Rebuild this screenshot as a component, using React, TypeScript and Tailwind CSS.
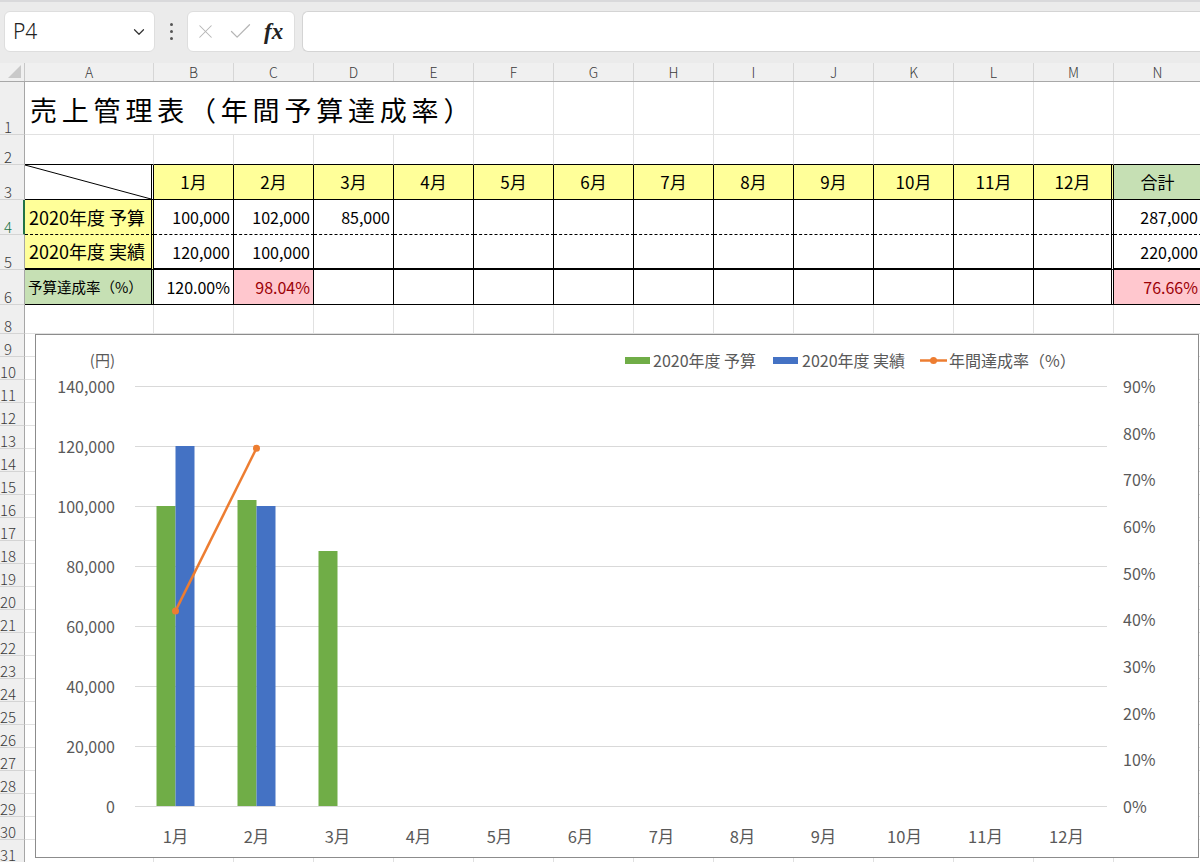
import { ChevronDown, X, Check } from 'lucide-react';

const GRID = 'grid grid-cols-[25px_129px_repeat(12,80px)_88px]';
const COLS = ['A', 'B', 'C', 'D', 'E', 'F', 'G', 'H', 'I', 'J', 'K', 'L', 'M', 'N'];
const MONTHS = Array.from({ length: 12 }, (_, i) => `${i + 1}月`);

const budget = [100000, 102000, 85000];
const actual = [120000, 100000];
const budgetTotal = budget.reduce((a, b) => a + b, 0);
const actualTotal = actual.reduce((a, b) => a + b, 0);
const fmt = (v: number) => v.toLocaleString('en-US');

type Row = { n: number; h: string };
const ROWS: Row[] = [
  { n: 1, h: 'h-[53px]' },
  { n: 2, h: 'h-[30px]' },
  { n: 3, h: 'h-[35px]' },
  { n: 4, h: 'h-[35px]' },
  { n: 5, h: 'h-[35px]' },
  { n: 6, h: 'h-[35px]' },
  { n: 8, h: 'h-[29px]' },
  ...Array.from({ length: 23 }, (_, i) => ({ n: 9 + i, h: 'h-[23px]' })),
];

function FormulaBar() {
  return (
    <div className="h-[63px] bg-[#ebebeb] border-t-2 border-[#d9d9db] flex items-start pt-[9px]">
      <div className="ml-[4px] w-[151px] h-[41px] bg-white rounded-md border border-[#dedede] flex items-center pl-[8px] pr-[6px]">
        <span className="text-[21px] text-[#222] flex-1 font-['Noto_Sans','Liberation_Sans',sans-serif] font-light">P4</span>
        <ChevronDown size={18} strokeWidth={1.6} className="text-[#333]" />
      </div>
      <div className="w-[32px] h-[41px] flex flex-col items-center justify-center gap-[4px]">
        <span className="w-[3px] h-[3px] rounded-full bg-[#555]" />
        <span className="w-[3px] h-[3px] rounded-full bg-[#555]" />
        <span className="w-[3px] h-[3px] rounded-full bg-[#555]" />
      </div>
      <div className="w-[108px] h-[41px] bg-white rounded-md border border-[#dedede] flex items-center pl-[6px]">
        <X size={23} strokeWidth={1.1} className="text-[#b5b5b5]" />
        <Check size={27} strokeWidth={1.1} className="text-[#b5b5b5] ml-[10px]" />
        <span className="ml-[10px] text-[23px] italic font-bold text-[#222] font-['Liberation_Serif',serif] leading-none">fx</span>
      </div>
      <div className="ml-[7px] flex-1 h-[41px] bg-white rounded-l-md border border-r-0 border-[#d4d4d4]" />
    </div>
  );
}

function ColumnHeaders() {
  return (
    <div className={`${GRID} h-[19px] bg-[#f0f0f0] border-b border-[#a8a8a8]`}>
      <div className="border-r border-[#c8c8c8] flex items-end justify-end pr-[3px] pb-[3px]">
        <svg width="13" height="13" viewBox="0 0 13 13">
          <polygon points="13,0 13,13 0,13" fill="#c9c9c9" />
        </svg>
      </div>
      {COLS.map((c) => (
        <div key={c} className="border-r border-[#d6d6d6] flex items-center justify-center text-[14px] font-light text-[#3a3a3a] leading-none">
          {c}
        </div>
      ))}
    </div>
  );
}

function RowHeader({ n }: { n: number }) {
  const selected = n === 4;
  return (
    <div
      className={
        selected
          ? 'bg-[#efefef] border-b border-b-[#d4d4d4] border-r-2 border-r-[#217346] flex items-end'
          : 'bg-[#efefef] border-b border-b-[#d4d4d4] border-r border-r-[#a6a6a6] flex items-end'
      }
    >
      <span
        className={
          selected
            ? 'w-[16px] text-center text-[15px] leading-[14px] font-light text-[#217346] whitespace-nowrap'
            : 'w-[16px] text-center text-[15px] leading-[14px] font-light text-[#3a3a3a] whitespace-nowrap'
        }
      >
        {n}
      </span>
    </div>
  );
}

function tableCell(r: number, c: number) {
  const parts = ['border-r border-b border-black flex items-center'];
  if (c === 0 || c === 12) parts.push('border-r-[3px] [border-right-style:double]');
  if (r === 4) parts.push('[border-bottom-style:dashed]');
  if (r === 5) parts.push('border-b-2');

  let content: React.ReactNode = null;
  const num = 'justify-end pr-[3px] text-[16px]';

  if (r === 3) {
    if (c === 0) {
      parts.push('relative');
      content = (
        <svg className="absolute inset-0 w-full h-full" preserveAspectRatio="none">
          <line x1="0" y1="0" x2="100%" y2="100%" stroke="black" strokeWidth="1" />
        </svg>
      );
    } else if (c <= 12) {
      parts.push('bg-[#ffff99] justify-center text-[17px]');
      content = MONTHS[c - 1];
    } else {
      parts.push('bg-[#c6e0b4] justify-center text-[17px]');
      content = '合計';
    }
  } else if (r === 4 || r === 5) {
    const vals = r === 4 ? budget : actual;
    if (c === 0) {
      parts.push('bg-[#ffff99] pl-[4px] text-[18px]');
      content = r === 4 ? '2020年度 予算' : '2020年度 実績';
    } else if (c === 13) {
      parts.push(num);
      content = fmt(r === 4 ? budgetTotal : actualTotal);
    } else if (c - 1 < vals.length) {
      parts.push(num);
      content = fmt(vals[c - 1]);
    }
  } else if (r === 6) {
    if (c === 0) {
      parts.push('bg-[#c6e0b4] pl-[3px] text-[14.5px]');
      content = '予算達成率（%）';
    } else if (c === 13) {
      parts.push(num, 'bg-[#ffc7ce] text-[#9c0006]');
      content = `${((actualTotal / budgetTotal) * 100).toFixed(2)}%`;
    } else if (c - 1 < actual.length) {
      const pct = (actual[c - 1] / budget[c - 1]) * 100;
      parts.push(num);
      if (pct < 100) parts.push('bg-[#ffc7ce] text-[#9c0006]');
      content = `${pct.toFixed(2)}%`;
    }
  }
  return (
    <div key={c} className={parts.join(' ')}>
      {content}
    </div>
  );
}

function SheetRow({ row }: { row: Row }) {
  const { n, h } = row;
  let cells: React.ReactNode[];
  if (n === 1) {
    cells = [
      <div key="title" className="col-span-5 border-r border-b border-[#e1e1e1] flex items-end pb-[11px] pl-[5px] text-[27px] tracking-[4.8px] leading-none whitespace-nowrap">
        売上管理表（年間予算達成率）
      </div>,
      ...COLS.slice(5).map((c) => <div key={c} className="border-r border-b border-[#e1e1e1]" />),
    ];
  } else if (n === 2) {
    cells = COLS.map((c) => <div key={c} className="border-r border-b border-[#e1e1e1] border-b-black" />);
  } else if (n >= 3 && n <= 6) {
    cells = COLS.map((_, i) => tableCell(n, i));
  } else {
    cells = COLS.map((c) => <div key={c} className="border-r border-b border-[#e1e1e1]" />);
  }
  return (
    <div className={`${GRID} ${h}`}>
      <RowHeader n={n} />
      {cells}
    </div>
  );
}

function Chart() {
  const left = 99;
  const right = 1071;
  const bottom = 471;
  const step = 81;
  const cx = (i: number) => left + step / 2 + step * i;
  const yv = (v: number) => bottom - v * 0.003;
  const yp = (p: number) => bottom - p * (420 / 90);
  // running actual total against the annual budget
  let run = 0;
  const rates = actual.map((v) => {
    run += v;
    return (run / budgetTotal) * 100;
  });
  const yTicks = Array.from({ length: 8 }, (_, i) => 140000 - i * 20000);
  const pTicks = Array.from({ length: 10 }, (_, i) => 90 - i * 10);
  const linePts = rates.map((p, i) => `${cx(i)},${yp(p)}`).join(' ');

  return (
    <div className="absolute left-[35px] top-[271px] w-[1164px] h-[524px] border border-[#8c8c8c] bg-white">
      <svg width="1162" height="522" viewBox="0 0 1162 522" className="block">
        {/* gridlines */}
        {yTicks.map((v) => (
          <line key={v} x1={left} x2={right} y1={yv(v) + 0.5} y2={yv(v) + 0.5} stroke="#d9d9d9" strokeWidth="1" />
        ))}

        {/* left axis */}
        <text x="79" y="24" textAnchor="end" dominantBaseline="central" fontSize="15" fill="#595959">(円)</text>
        {yTicks.map((v) => (
          <text key={v} x="79" y={yv(v)} textAnchor="end" dominantBaseline="central" fontSize="16" fill="#595959">
            {fmt(v)}
          </text>
        ))}

        {/* right axis */}
        {pTicks.map((p) => (
          <text key={p} x="1087" y={yp(p)} dominantBaseline="central" fontSize="16" fill="#595959">
            {p}%
          </text>
        ))}

        {/* month labels */}
        {MONTHS.map((m, i) => (
          <text key={m} x={cx(i)} y="501" textAnchor="middle" dominantBaseline="central" fontSize="16.5" fill="#595959">
            {m}
          </text>
        ))}

        {/* bars */}
        {budget.map((v, i) => (
          <rect key={`b${i}`} x={cx(i) - 19} y={yv(v)} width="19" height={v * 0.003} fill="#70ad47" />
        ))}
        {actual.map((v, i) => (
          <rect key={`a${i}`} x={cx(i)} y={yv(v)} width="19" height={v * 0.003} fill="#4472c4" />
        ))}

        {/* achievement line */}
        <polyline points={linePts} fill="none" stroke="#ed7d31" strokeWidth="2.5" strokeLinejoin="round" />
        {rates.map((p, i) => (
          <circle key={i} cx={cx(i)} cy={yp(p)} r="3.5" fill="#ed7d31" />
        ))}

        {/* legend */}
        <rect x="589" y="22" width="25" height="7" fill="#70ad47" />
        <text x="617" y="25" dominantBaseline="central" fontSize="16" fill="#595959">2020年度 予算</text>
        <rect x="737" y="22" width="25" height="7" fill="#4472c4" />
        <text x="766" y="25" dominantBaseline="central" fontSize="16" fill="#595959">2020年度 実績</text>
        <line x1="884" x2="911" y1="25.5" y2="25.5" stroke="#ed7d31" strokeWidth="2.5" />
        <circle cx="897.5" cy="25.5" r="3.5" fill="#ed7d31" />
        <text x="913" y="25" dominantBaseline="central" fontSize="16" fill="#595959">年間達成率（%）</text>
      </svg>
    </div>
  );
}

export default function App() {
  return (
    <div className="w-[1200px] h-[862px] overflow-hidden bg-white text-black font-['Noto_Sans_CJK_JP','Noto_Sans',sans-serif]">
      <FormulaBar />
      <div className="relative">
        <ColumnHeaders />
        {ROWS.map((row) => (
          <SheetRow key={row.n} row={row} />
        ))}
        <Chart />
      </div>
    </div>
  );
}
